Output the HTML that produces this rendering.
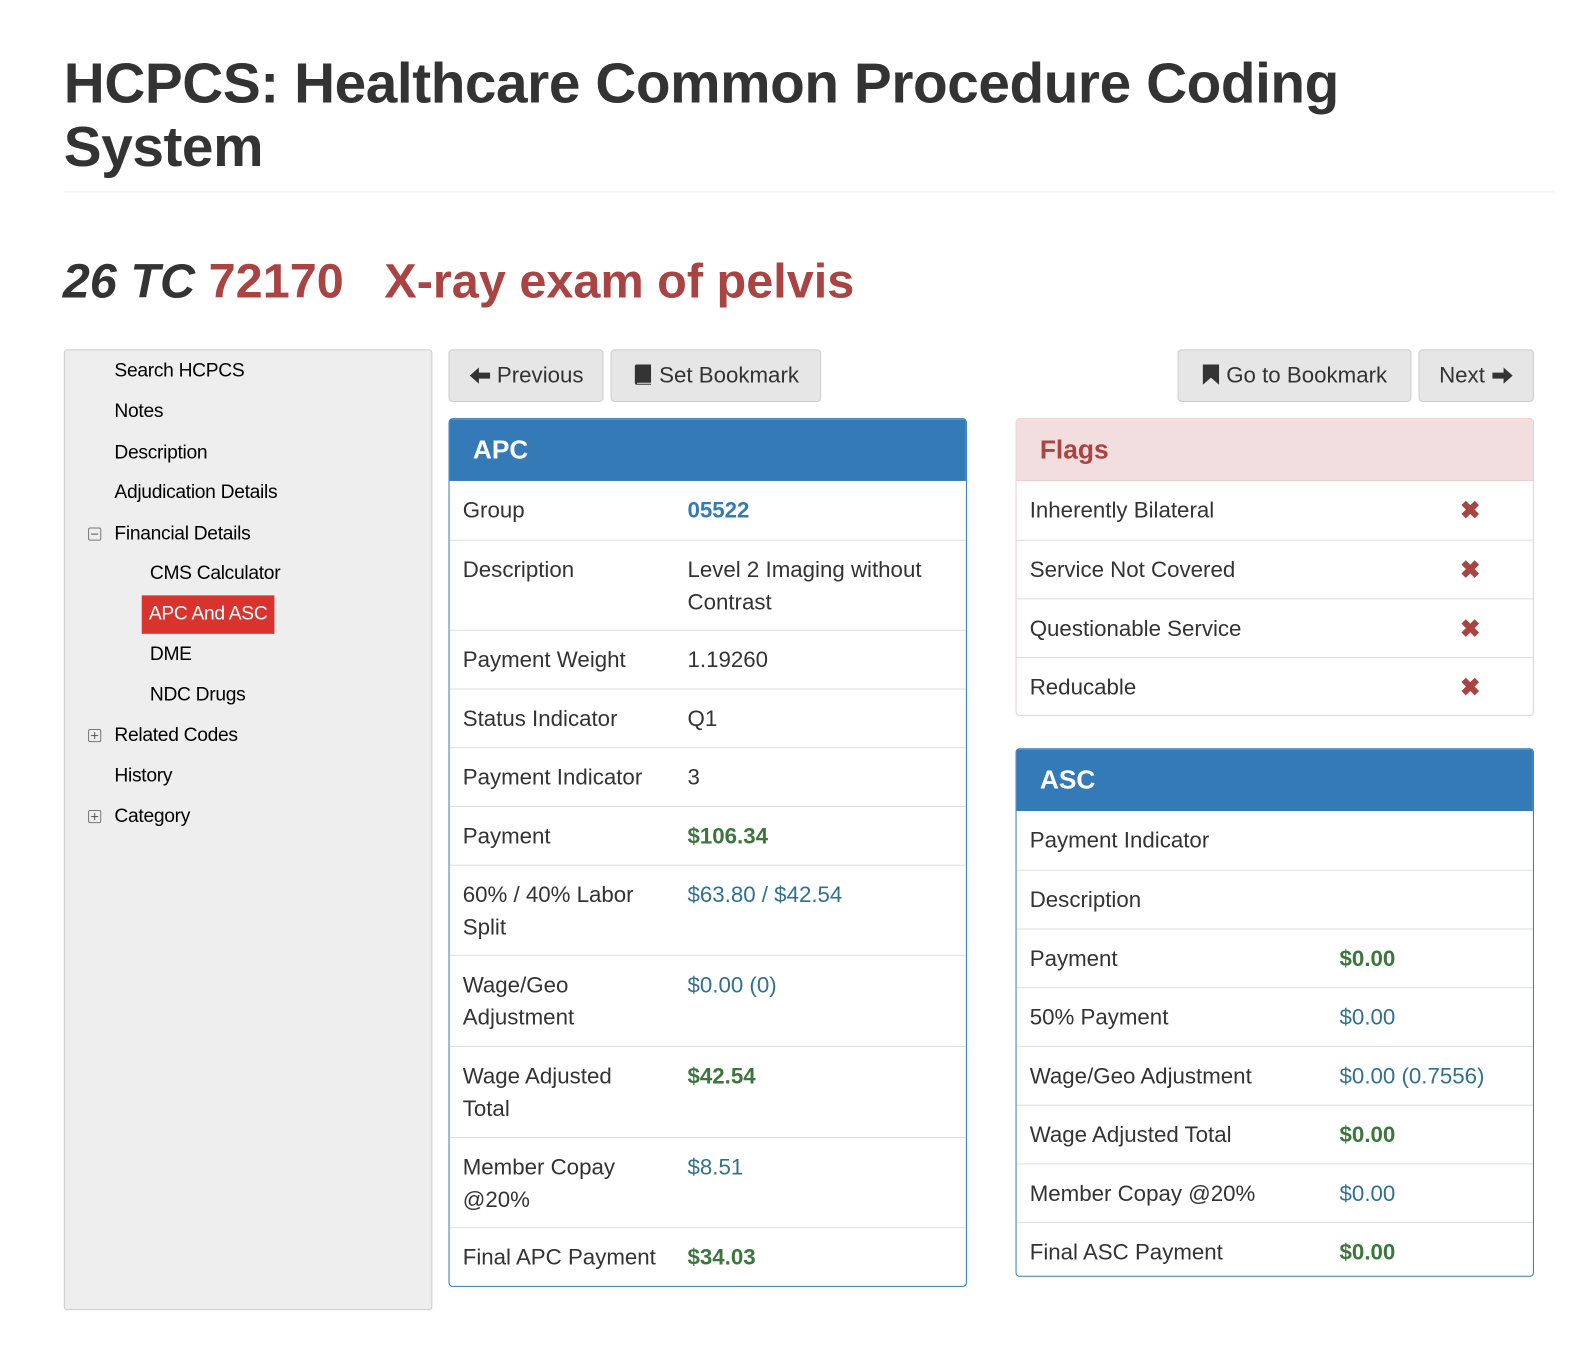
<!DOCTYPE html>
<html><head><meta charset="utf-8"><style>
*{box-sizing:border-box;margin:0;padding:0}
body{width:1586px;height:1334px;background:#fff;font-family:"Liberation Sans",Helvetica,Arial,sans-serif;color:#333;position:relative;overflow:hidden}
#w{position:absolute;left:0;top:0;width:1586px;height:1334px;transform:scale(1.0125);transform-origin:0 0}
.abs{position:absolute}
h1{position:absolute;left:63px;top:50px;font-size:56px;font-weight:bold;line-height:63px;color:#333;letter-spacing:-0.4px}
.hr{position:absolute;left:63px;top:189px;width:1472px;border-top:1px solid #eee}
h2{position:absolute;left:62px;top:251px;font-size:48px;font-weight:bold;color:#a94442;line-height:56px;white-space:pre}
h2 i{color:#333}
.side{left:63px;top:345px;width:364px;height:949px;background:#eee;border:1px solid #ccc;border-radius:3px}
.side div{position:absolute;font-family:"Liberation Sans Narrow","Liberation Sans",sans-serif;font-size:19px;color:#000;line-height:28px;white-space:nowrap;letter-spacing:-0.3px}
.side .act{background:#d9332e;color:#fff;padding:0 7px}
.tg{position:absolute;width:13px;height:13px;border:1px solid #777;border-radius:2px}
.tg:before{content:"";position:absolute;left:2px;top:5px;width:7px;height:1px;background:#555}
.tg.p:after{content:"";position:absolute;left:5px;top:2px;width:1px;height:7px;background:#555}
.btn{position:absolute;top:345px;height:52px;background:#e6e6e6;border:1px solid #ccc;border-radius:4px;font-size:22px;line-height:50px;color:#333;text-align:center;white-space:nowrap}
.btn svg{vertical-align:-3px}
.panel{position:absolute;border:1px solid #337ab7;border-radius:4px;overflow:hidden;background:#fff}
.ph{height:61px;background:#337ab7;color:#fff;font-size:26px;font-weight:bold;padding-left:23px;line-height:60px}
.row{position:relative;border-top:1px solid #ddd;font-size:22px;line-height:32px}
.row .l{position:absolute;left:13px;top:13px;width:210px}
.row .v{position:absolute;top:13px}
.g{color:#3c763d;font-weight:bold}
.b{color:#31708f}
.bb{color:#337ab7;font-weight:bold}
.x{position:absolute;left:438px;top:14px;color:#a94442;font-size:24px;font-weight:bold}
</style></head><body><div id="w">
<h1>HCPCS: Healthcare Common Procedure Coding<br>System</h1>
<div class="hr"></div>
<h2><i>26 TC</i> 72170   X-ray exam of pelvis</h2>

<div class="abs side">
<div style="left:49px;top:7px">Search HCPCS</div>
<div style="left:49px;top:47px">Notes</div>
<div style="left:49px;top:88px">Description</div>
<div style="left:49px;top:127px">Adjudication Details</div>
<span class="tg" style="left:23px;top:175px"></span>
<div style="left:49px;top:168px">Financial Details</div>
<div style="left:84px;top:207px">CMS Calculator</div>
<div class="act" style="left:76px;top:242px;height:38px;line-height:38px">APC And ASC</div>
<div style="left:84px;top:287px">DME</div>
<div style="left:84px;top:327px">NDC Drugs</div>
<span class="tg p" style="left:23px;top:374px"></span>
<div style="left:49px;top:367px">Related Codes</div>
<div style="left:49px;top:407px">History</div>
<span class="tg p" style="left:23px;top:454px"></span>
<div style="left:49px;top:447px">Category</div>
</div>

<div class="btn" style="left:443px;width:153px"><svg width="22" height="20" viewBox="0 0 22 20"><path d="M1 10 L10 2 L10 7 L21 7 L21 13 L10 13 L10 18 Z" fill="#333"/></svg> Previous</div>
<div class="btn" style="left:603px;width:208px"><svg width="20" height="22" viewBox="0 0 20 22"><path d="M2 3 Q2 1 4 1 L18 1 L18 19 L5 19 Q4 19 4 20 L18 20 L18 21 L4 21 Q2 21 2 19 Z" fill="#333"/></svg> Set Bookmark</div>
<div class="btn" style="left:1163px;width:231px"><svg width="18" height="22" viewBox="0 0 18 22"><path d="M1 1 L17 1 L17 21 L9 14 L1 21 Z" fill="#333"/></svg> Go to Bookmark</div>
<div class="btn" style="left:1401px;width:114px">Next <svg width="22" height="20" viewBox="0 0 22 20"><path d="M21 10 L12 2 L12 7 L1 7 L1 13 L12 13 L12 18 Z" fill="#333"/></svg></div>

<div class="panel" style="left:443px;top:413px;width:512px;height:858px">
<div class="ph">APC</div>
<div class="row" style="height:58px;border-top:none"><span class="l">Group</span><span class="v bb" style="left:235px">05522</span></div>
<div class="row" style="height:89px"><span class="l">Description</span><span class="v" style="left:235px">Level 2 Imaging without<br>Contrast</span></div>
<div class="row" style="height:58px"><span class="l">Payment Weight</span><span class="v" style="left:235px">1.19260</span></div>
<div class="row" style="height:58px"><span class="l">Status Indicator</span><span class="v" style="left:235px">Q1</span></div>
<div class="row" style="height:58px"><span class="l">Payment Indicator</span><span class="v" style="left:235px">3</span></div>
<div class="row" style="height:58px"><span class="l">Payment</span><span class="v g" style="left:235px">$106.34</span></div>
<div class="row" style="height:89px"><span class="l">60% / 40% Labor<br>Split</span><span class="v b" style="left:235px">$63.80 / $42.54</span></div>
<div class="row" style="height:90px"><span class="l">Wage/Geo<br>Adjustment</span><span class="v b" style="left:235px">$0.00 (0)</span></div>
<div class="row" style="height:90px"><span class="l">Wage Adjusted<br>Total</span><span class="v g" style="left:235px">$42.54</span></div>
<div class="row" style="height:89px"><span class="l">Member Copay<br>@20%</span><span class="v b" style="left:235px">$8.51</span></div>
<div class="row" style="height:59px"><span class="l">Final APC Payment</span><span class="v g" style="left:235px">$34.03</span></div>
</div>

<div class="panel" style="left:1003px;top:413px;width:512px;height:294px;border-color:#ebccd1">
<div class="ph" style="background:#f2dede;color:#a94442;border-bottom:1px solid #ebccd1;height:61px">Flags</div>
<div class="row" style="height:58px;border-top:none"><span class="l">Inherently Bilateral</span><span class="x">✖</span></div>
<div class="row" style="height:58px"><span class="l">Service Not Covered</span><span class="x">✖</span></div>
<div class="row" style="height:58px"><span class="l">Questionable Service</span><span class="x">✖</span></div>
<div class="row" style="height:58px"><span class="l">Reducable</span><span class="x">✖</span></div>
</div>

<div class="panel" style="left:1003px;top:739px;width:512px;height:522px">
<div class="ph">ASC</div>
<div class="row" style="height:58px;border-top:none"><span class="l" style="width:300px">Payment Indicator</span></div>
<div class="row" style="height:58px"><span class="l">Description</span></div>
<div class="row" style="height:58px"><span class="l">Payment</span><span class="v g" style="left:319px">$0.00</span></div>
<div class="row" style="height:58px"><span class="l">50% Payment</span><span class="v b" style="left:319px">$0.00</span></div>
<div class="row" style="height:58px"><span class="l" style="width:300px">Wage/Geo Adjustment</span><span class="v b" style="left:319px">$0.00 (0.7556)</span></div>
<div class="row" style="height:58px"><span class="l" style="width:300px">Wage Adjusted Total</span><span class="v g" style="left:319px">$0.00</span></div>
<div class="row" style="height:58px"><span class="l" style="width:300px">Member Copay @20%</span><span class="v b" style="left:319px">$0.00</span></div>
<div class="row" style="height:58px"><span class="l" style="width:300px">Final ASC Payment</span><span class="v g" style="left:319px">$0.00</span></div>
</div>
</div></body></html>
